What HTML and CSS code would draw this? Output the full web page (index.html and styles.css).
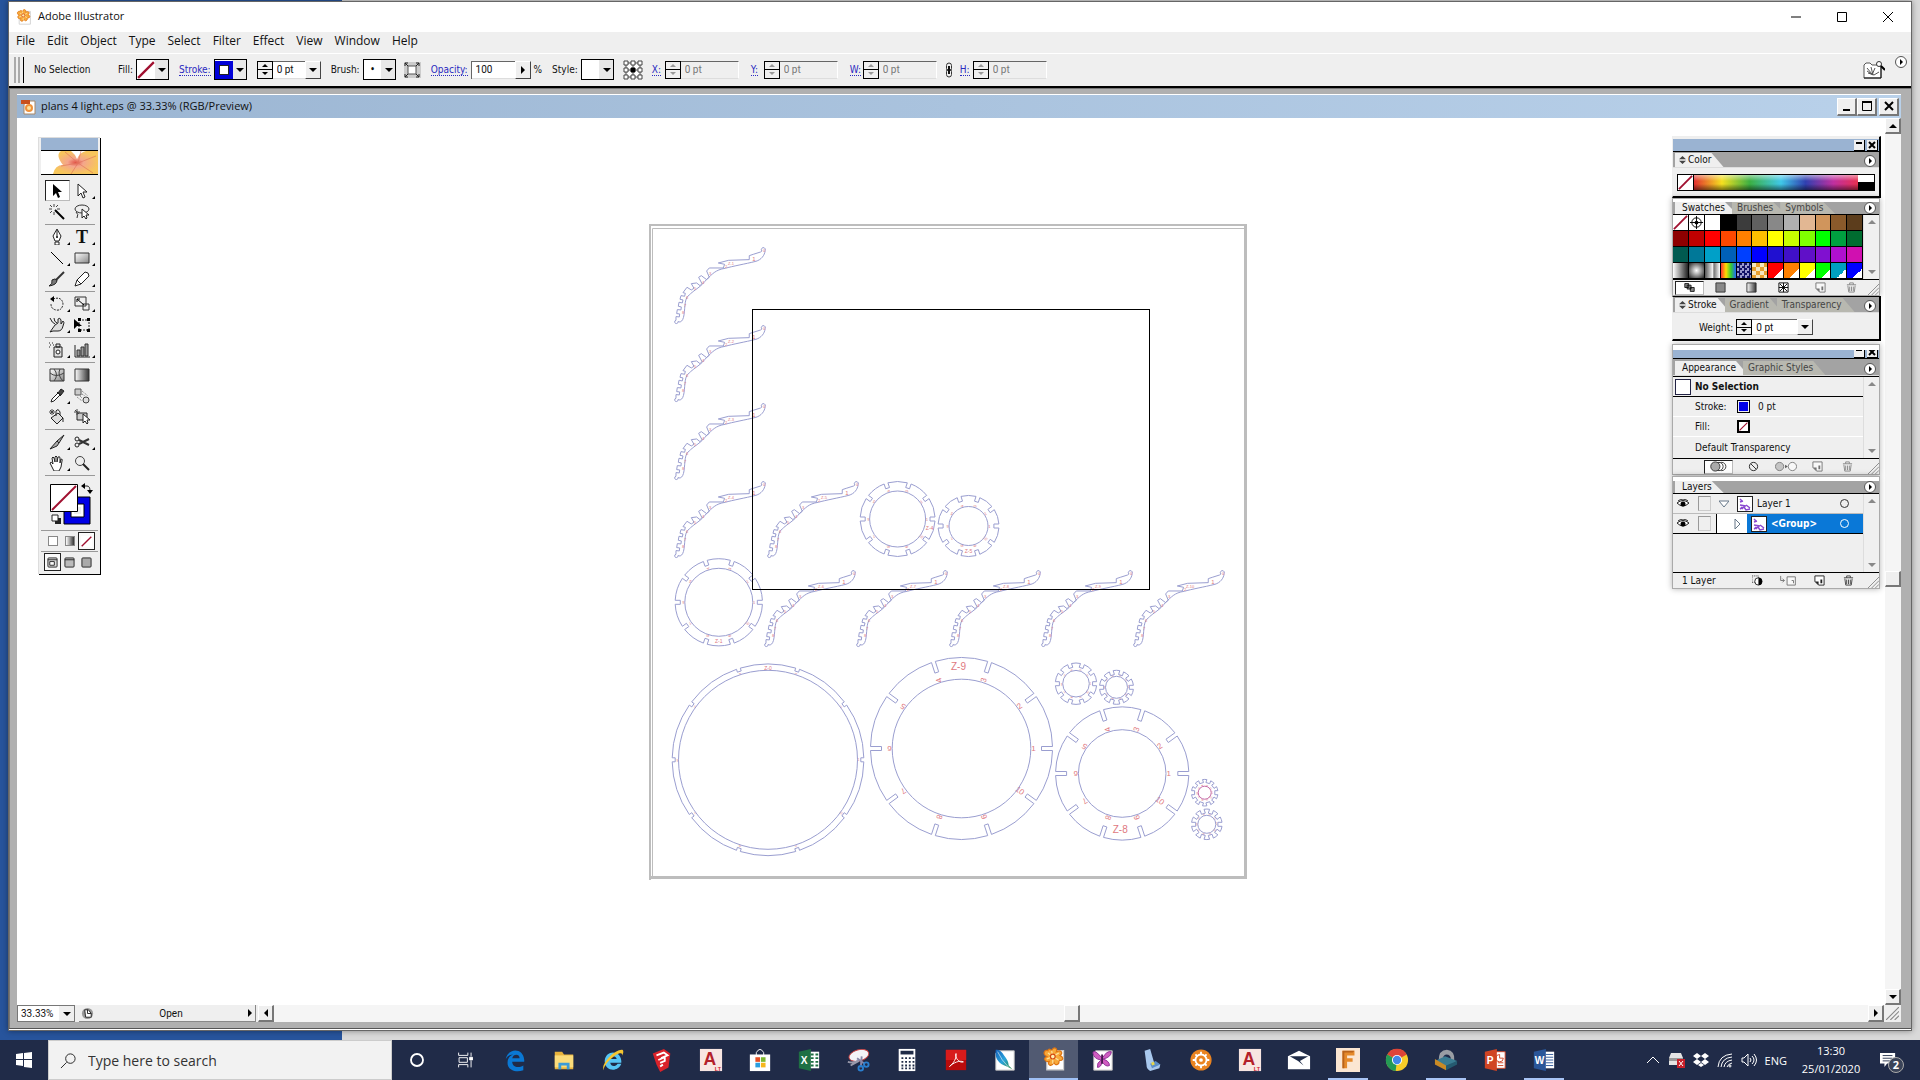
FILE: index.html
```html
<!DOCTYPE html>
<html lang="en">
<head>
    <meta charset="UTF-8">
    <meta name="viewport" content="width=device-width, initial-scale=1.0">
    <title>Adobe Illustrator</title>
    <link rel="stylesheet" href="styles.css">
</head>
<body>
    <svg class="defs" aria-hidden="true">
        <defs>
            <linearGradient id="gray" x1="0" x2="1"><stop offset="0" stop-color="#fff"/><stop offset="1" stop-color="#333"/></linearGradient>
            <linearGradient id="soft" x1="0" x2="1" y2="1"><stop offset="0" stop-color="#fff"/><stop offset="1" stop-color="#888"/></linearGradient>
            <radialGradient id="petal"><stop offset="0" stop-color="#e2574a"/><stop offset=".35" stop-color="#f4a58c"/><stop offset="1" stop-color="#f7c65c"/></radialGradient>
            <linearGradient id="feather" x1="0" y1="0" x2="1" y2="1"><stop offset="0" stop-color="#1560b8"/><stop offset=".5" stop-color="#2aa4dc"/><stop offset="1" stop-color="#2b8a3a"/></linearGradient>
            <symbol id="flower" viewBox="0 0 20 20">
                <path d="M6 3h12v16H4V7z" fill="#fff" stroke="#ccc"/>
                <path d="M8 3c2-4 5-2 4 1 4-2 6 1 3 3 4 2 2 5-1 4 1 4-3 5-4 2-2 4-6 2-4-1-4 1-5-3-2-4-4-2-2-6 1-5 0-1 1-2 3 0z" fill="#f8a93a" stroke="#de7412"/>
                <path d="M9 8L8 3M9 8l5-3M9 8l5 3M9 8v6M9 8l-5 2M9 8L5 5" stroke="#fde3a0"/>
                <circle cx="9" cy="8" r="2" fill="#fff0b0" stroke="#d4480f"/>
            </symbol>
            <symbol id="trash" viewBox="0 0 12 12"><path d="M1 3h10M4 3V1h4v2M2 4l1 7h6l1-7M4 5v5M6 5v5M8 5v5" fill="none" stroke="#444"/></symbol>
            <symbol id="page" viewBox="0 0 12 12"><path d="M1 1h10v10H5L1 7z" fill="#fff" stroke="currentColor"/><path d="M1 7h4v4zM7 5h2v4H7z" fill="currentColor"/></symbol>
            <symbol id="grip" viewBox="0 0 12 12"><path d="M0 12L12 0M4 12l8-8M8 12l4-4" stroke="#888" fill="none"/></symbol>
            <symbol id="none" viewBox="0 0 16 16"><path d="M0 0h16v16H0z" fill="#fff"/><path d="M1 15L15 1" stroke="#a01030" stroke-width="2"/></symbol>
            <symbol id="eye" viewBox="0 0 12 10"><path d="M0 4q6-5 12 0-6 6-12 0z" fill="#fff" stroke="#222"/><circle cx="6" cy="5" r="2.500"/><path d="M1 2q5-4 10 0" stroke="#222" fill="none"/></symbol>
            <symbol id="thumb" viewBox="0 0 16 16"><path d="M0 0h16v16H0z" fill="#fff" stroke="#222" stroke-width="2"/><path d="M3 3l2 2M3 6l3-1M3 9l6 1M3 13l4-2 2 3 4-1M9 9l4 3M4 11l2 2" stroke="#8a4ad0" stroke-width="1.500" fill="none"/></symbol>
        </defs>
    </svg>

    <main class="app">
        <header class="titlebar">
            <svg class="app-icon"><use href="#flower"/></svg>
            <span>Adobe Illustrator</span>
            <div class="win-buttons">
                <button aria-label="Minimize"><svg viewBox="0 0 12 12"><path d="M1 6h10"/></svg></button>
                <button aria-label="Maximize"><svg viewBox="0 0 12 12"><path d="M1.500 1.500h9v9h-9z"/></svg></button>
                <button aria-label="Close"><svg viewBox="0 0 12 12"><path d="M1 1l10 10M11 1L1 11"/></svg></button>
            </div>
        </header>

        <nav class="menubar">
            <button>File</button><button>Edit</button><button>Object</button><button>Type</button><button>Select</button><button>Filter</button><button>Effect</button><button>View</button><button>Window</button><button>Help</button>
        </nav>

        <div class="controlbar">
            <div class="gripper"></div>
            <span class="selection">No Selection</span>
            <div class="field">
                <span>Fill:</span>
                <button class="swatch-drop" aria-label="Fill color"><svg><use href="#none"/></svg><i class="down"></i></button>
            </div>
            <div class="field">
                <a href="#">Stroke:</a>
                <button class="swatch-drop" aria-label="Stroke color"><b class="stroke-chip"></b><i class="down"></i></button>
            </div>
            <div class="combo weight">
                <span class="spinner"><button aria-label="Increase stroke"></button><button aria-label="Decrease stroke"></button></span>
                <input type="text" value="0 pt" aria-label="Stroke weight">
                <button class="arrow" aria-label="Stroke weights"><i class="down"></i></button>
            </div>
            <div class="field">
                <span>Brush:</span>
                <button class="swatch-drop" aria-label="Brush"><b class="brush-chip">•</b><i class="down"></i></button>
            </div>
            <button class="tiny-icon" aria-label="Options"><svg viewBox="0 0 16 16"><path d="M4 4h8v8H4z" fill="#fff" stroke="#555"/><path d="M1 4V1h3M12 1h3v3M15 12v3h-3M4 15H1v-3M1 1l3 3M15 1l-3 3M15 15l-3-3M1 15l3-3" fill="none" stroke="#222"/></svg></button>
            <div class="field">
                <a href="#">Opacity:</a>
                <div class="combo opacity">
                    <input type="text" value="100" aria-label="Opacity">
                    <button class="arrow" aria-label="Opacity slider"><i class="right"></i></button>
                </div>
                <span>%</span>
            </div>
            <div class="field">
                <span>Style:</span>
                <button class="swatch-drop" aria-label="Style"><b class="blank-chip"></b><i class="down"></i></button>
            </div>
            <svg class="refpoint" viewBox="0 0 20 20" fill="#fff" stroke="#444"><path d="M3 3h14v14H3zM10 3v14M3 10h14"/><path d="M1 1h4v4H1zM8 1h4v4H8zM15 1h4v4h-4zM1 8h4v4H1zM15 8h4v4h-4zM1 15h4v4H1zM8 15h4v4H8zM15 15h4v4h-4z"/><path d="M8 8h4v4H8z" fill="#000" stroke="#000"/></svg>
            <div class="field coord">
                <a href="#">X:</a>
                <div class="combo off"><span class="spinner"><button aria-label="X up" disabled></button><button aria-label="X down" disabled></button></span><input type="text" value="0 pt" aria-label="X" disabled></div>
            </div>
            <div class="field coord">
                <a href="#">Y:</a>
                <div class="combo off"><span class="spinner"><button aria-label="Y up" disabled></button><button aria-label="Y down" disabled></button></span><input type="text" value="0 pt" aria-label="Y" disabled></div>
            </div>
            <div class="field coord">
                <a href="#">W:</a>
                <div class="combo off"><span class="spinner"><button aria-label="W up" disabled></button><button aria-label="W down" disabled></button></span><input type="text" value="0 pt" aria-label="Width" disabled></div>
            </div>
            <svg class="chain" viewBox="0 0 8 16" fill="none" stroke="#333"><rect x="1.500" y="1" width="5" height="8" rx="2.500"/><rect x="1.500" y="7" width="5" height="8" rx="2.500"/><path d="M4 4v8" stroke="#111" stroke-width="2"/></svg>
            <div class="field coord">
                <a href="#">H:</a>
                <div class="combo off"><span class="spinner"><button aria-label="H up" disabled></button><button aria-label="H down" disabled></button></span><input type="text" value="0 pt" aria-label="Height" disabled></div>
            </div>
            <button class="bridge" aria-label="Go to Bridge"><svg viewBox="0 0 22 18"><path d="M1 17V4l2-2h4l2 2h9v13z" fill="#fff" stroke="#555"/><path d="M4 7l5 6M8 6l2 8M12 7l-3 7M5 12l6 2 5-3M4 10l6 4" stroke="#555" fill="none"/><path d="M1 17h17V5" stroke="#111" fill="none"/><circle cx="16" cy="3" r="2.500" fill="#fff" stroke="#333"/><path d="M18 5l4 4" stroke="#000" stroke-width="2"/></svg></button>
            <button class="round" aria-label="Palette menu"><i class="right"></i></button>
        </div>

        <div class="workspace">
            <section class="doc">
                <header class="doc-title">
                    <svg class="doc-icon" viewBox="0 0 16 16"><path d="M4 2h10v13H3V6z" fill="#fff" stroke="#a86"/><path d="M0 1h9v4H0z" fill="#c8501e"/><circle cx="8" cy="9" r="4" fill="#f0913a"/><circle cx="8" cy="9" r="2" fill="#fbe3a0"/></svg>
                    <span>plans 4 light.eps @ 33.33% (RGB/Preview)</span>
                    <div class="doc-buttons">
                        <button aria-label="Minimize document"><svg viewBox="0 0 14 14"><path d="M3 11h7"/></svg></button>
                        <button aria-label="Maximize document"><svg viewBox="0 0 14 14"><path d="M2 3h10"/><path d="M2.500 3v8.500h9V3" stroke-width="1"/></svg></button>
                        <button aria-label="Close document"><svg viewBox="0 0 14 14"><path d="M3 3l8 8M11 3l-8 8"/></svg></button>
                    </div>
                </header>

                <div class="doc-body">
                    <div class="canvas">
                        <svg class="artboard" id="artboard" viewBox="649 224 598 656">
                            <path d="M650 880V225h597" stroke="#bdbdbd" stroke-width="2" fill="none"/>
                            <path d="M652.500 877V228.500H1244" stroke="#bdbdbd" fill="none"/>
                            <path d="M650 877.500h595.500V225" stroke="#bdbdbd" stroke-width="3" fill="none"/>
                            <g id="art"></g>
                            <rect x="752.500" y="309.500" width="397" height="280" fill="none" stroke="#000"/>
                        </svg>

                        <aside class="toolbox" aria-label="Tools">
                            <div class="tool-bar"></div>
                            <svg class="tool-logo" viewBox="0 0 57 23" preserveAspectRatio="none"><path d="M0 0h57v23H0z" fill="#fff"/><path d="M12 23q2-9 10-9Q14 4 20 0h10q4 3 6 8 3-7 9-8h12v23z" fill="url(#petal)"/><path d="M37 12L24 1M37 12l18-7M37 12l15 10M37 12L20 15M37 12l-7 11M37 12l3-12" stroke="#e0705a" opacity=".6"/></svg>
                            <div class="tools">
                                <button class="on" aria-label="Selection"><svg viewBox="0 0 16 16"><path d="M4 1v12l3-3 2 5 2-1-2-5h4z"/></svg></button>
                                <button class="more" aria-label="Direct Selection"><svg viewBox="0 0 16 16"><path d="M4 1v12l3-3 2 5 2-1-2-5h4z" fill="#fff" stroke="#222"/></svg></button>
                                <button aria-label="Magic Wand"><svg viewBox="0 0 16 16"><path d="M6 6l9 9" stroke="#000" stroke-width="2"/><path d="M5 0v3M5 8v3M0 5h3M8 5h3M1 1l2 2M9 1L7 3M1 9l2-2" stroke="#444"/></svg></button>
                                <button aria-label="Lasso"><svg viewBox="0 0 16 16"><ellipse cx="8" cy="5" rx="7" ry="4" fill="none" stroke="#333"/><path d="M2 8q3 2 1 6" fill="none" stroke="#333"/><path d="M8 5v9l2-2 2 3 1-1-1-3h3z" fill="#fff" stroke="#222"/></svg></button>
                                <hr>
                                <button class="more" aria-label="Pen"><svg viewBox="0 0 16 16"><path d="M8 0L4 7l2 5h4l2-5zM6 13h4v3H6z" fill="#fff" stroke="#222"/><path d="M8 1v6" stroke="#222"/><circle cx="8" cy="8" r="1"/></svg></button>
                                <button class="more type" aria-label="Type">T</button>
                                <button class="more" aria-label="Line"><svg viewBox="0 0 16 16"><path d="M2 2l12 12" stroke="#000"/></svg></button>
                                <button class="more" aria-label="Rectangle"><svg viewBox="0 0 16 16"><path d="M1 3h14v10H1z" fill="url(#soft)" stroke="#333"/></svg></button>
                                <button aria-label="Paintbrush"><svg viewBox="0 0 16 16"><path d="M15 1L7 9" stroke="#333" stroke-width="2"/><path d="M8 9q0 5-8 6 4-2 3-6 3-2 5 0z" fill="#777" stroke="#222"/></svg></button>
                                <button class="more" aria-label="Pencil"><svg viewBox="0 0 16 16"><path d="M1 15l2-6 8-8q4 0 4 4l-8 8zM3 9l4 4" fill="#fff" stroke="#222"/></svg></button>
                                <hr>
                                <button class="more" aria-label="Rotate"><svg viewBox="0 0 16 16"><path d="M4 3q9-3 10 5-1 7-7 6-5-1-5-6" fill="none" stroke="#222" stroke-dasharray="2 1"/><path d="M5 0v6L1 3z"/></svg></button>
                                <button class="more" aria-label="Scale"><svg viewBox="0 0 16 16"><path d="M1 1h11v9H1zM9 8h6v6H9z" fill="none" stroke="#333"/><path d="M3 3l7 6M3 6V3h3" stroke="#000" fill="none"/></svg></button>
                                <button class="more" aria-label="Warp"><svg viewBox="0 0 16 16"><path d="M1 1q2 5 5 6M5 1q0 4 3 5M1 15l5-7 3-2V2q2-2 3 1v4l2-3q2 1 0 5-1 5-5 5H4z" fill="#ddd" stroke="#222"/></svg></button>
                                <button aria-label="Free Transform"><svg viewBox="0 0 16 16"><path d="M5 3h10v10H5z" fill="none" stroke="#222" stroke-dasharray="2 1"/><path d="M0 2v10l3-3h5z"/><path d="M4 1h3v3H4zM13 1h3v3h-3zM13 12h3v3h-3zM4 12h3v3H4z"/></svg></button>
                                <hr>
                                <button class="more" aria-label="Symbol Sprayer"><svg viewBox="0 0 16 16"><path d="M5 5h8v10H5zM7 2h4v3H7z" fill="#ddd" stroke="#222"/><circle cx="9" cy="10" r="2" fill="#fff" stroke="#222"/><path d="M0 1h1M3 1h1M1 3h1M4 3h1M0 5h1" stroke="#222"/></svg></button>
                                <button class="more" aria-label="Column Graph"><svg viewBox="0 0 16 16"><path d="M1 3v12h15" stroke="#222" fill="none"/><path d="M3 8h3v6H3zM7 5h3v9H7zM11 2h3v12h-3z" fill="#999" stroke="#333"/></svg></button>
                                <hr>
                                <button aria-label="Mesh"><svg viewBox="0 0 16 16"><path d="M1 2h14v12H1z" fill="url(#soft)" stroke="#333"/><path d="M1 6q6 5 14 0M5 2q5 6 0 12M11 2q-3 6 3 12" fill="none" stroke="#444"/></svg></button>
                                <button aria-label="Gradient"><svg viewBox="0 0 16 16"><path d="M1 2h14v12H1z" fill="url(#gray)" stroke="#333"/></svg></button>
                                <button class="more" aria-label="Eyedropper"><svg viewBox="0 0 16 16"><path d="M2 14l1-3 6-6 2 2-6 6z" fill="#fff" stroke="#222"/><path d="M8 4l4 4M9 5l3-4 3 2-3 4z" stroke="#222" fill="#444"/></svg></button>
                                <button aria-label="Blend"><svg viewBox="0 0 16 16"><path d="M1 1h6v6H1z" fill="#ccc" stroke="#555"/><circle cx="12" cy="12" r="3" fill="#ddd" stroke="#444"/><path d="M8 3l6 5M8 6l3 2M3 9l5 4M6 8l2 2" stroke="#777" stroke-dasharray="1 1"/></svg></button>
                                <button aria-label="Live Paint Bucket"><svg viewBox="0 0 16 16"><path d="M2 9l7-5 5 5-6 6z" fill="#ddd" stroke="#222"/><path d="M7 7V2q2-3 4 1v3M14 9v4" fill="none" stroke="#222"/><path d="M3 0v6M0 3h6M1 1l4 4M5 1L1 5" stroke="#444"/></svg></button>
                                <button aria-label="Live Paint Selection"><svg viewBox="0 0 16 16"><path d="M3 4h10v7H3z" fill="#ccc" stroke="#222"/><path d="M9 5v9l2-2 2 3 1-1-1-3h3z" fill="#fff" stroke="#222"/><path d="M3 0v6M0 3h6M1 1l4 4" stroke="#444"/></svg></button>
                                <hr>
                                <button class="more" aria-label="Slice"><svg viewBox="0 0 16 16"><path d="M15 1L8 7l2 2zM1 15l7-8 2 2-2 3z" fill="#aaa" stroke="#222"/></svg></button>
                                <button class="more" aria-label="Scissors"><svg viewBox="0 0 16 16"><path d="M5 6l10 5M5 10l10-5" stroke="#333" stroke-width="2"/><circle cx="3" cy="5" r="2" fill="none" stroke="#222"/><circle cx="3" cy="11" r="2" fill="none" stroke="#222"/></svg></button>
                                <button class="more" aria-label="Hand"><svg viewBox="0 0 16 16"><path d="M4 14L1 8q1-2 3 1L3 3q1-2 2 0l1 4V2q1-2 2 0v5l1-5q2-1 2 1v5l1-4q2 0 1 2l-1 6-2 4H5z" fill="#fff" stroke="#222"/></svg></button>
                                <button aria-label="Zoom"><svg viewBox="0 0 16 16"><circle cx="6" cy="6" r="4.500" fill="#eee" stroke="#444"/><path d="M9 9l6 6" stroke="#222" stroke-width="2"/></svg></button>
                                <hr>
                            </div>
                            <svg class="fill-stroke" viewBox="1 0 57 46"><path d="M24 15h26v27H24z" fill="#0000e6" stroke="#000"/><path d="M31 22h13v13H31z" fill="#fff" stroke="#000"/><path d="M34 25h7v7h-7z" fill="#efefef"/><path d="M10.500 2.500h27v27h-27z" fill="#fff" stroke="#000"/><path d="M12 28L36 4" stroke="#a01030" stroke-width="2"/><path d="M43 4h4q3 0 3 5" fill="none" stroke="#222"/><path d="M41 4l4-3v6zM47 8h6l-3 4z"/><path d="M15 36h6v6h-6z" fill="#222"/><path d="M12 33h6v6h-6z" fill="#fff" stroke="#222"/></svg>
                            <hr>
                            <div class="modes">
                                <button aria-label="Color"><i class="m-white"></i></button>
                                <button aria-label="Gradient fill"><i class="m-grad"></i></button>
                                <button class="on" aria-label="None"><svg><use href="#none"/></svg></button>
                            </div>
                            <hr>
                            <div class="modes">
                                <button class="on" aria-label="Standard screen"><svg viewBox="0 0 12 12"><rect x="1" y="1" width="10" height="10" rx="1" fill="#ddd" stroke="#222"/><path d="M1 3h10M3 5h5v4H3z" fill="#fff" stroke="#222"/></svg></button>
                                <button aria-label="Full screen with menu"><svg viewBox="0 0 12 12"><rect x="1" y="1" width="10" height="10" rx="1" fill="#bbb" stroke="#222"/><path d="M1 3h10" stroke="#222"/></svg></button>
                                <button aria-label="Full screen"><svg viewBox="0 0 12 12"><rect x="1" y="1" width="10" height="10" rx="1" fill="#aaa" stroke="#222"/></svg></button>
                            </div>
                        </aside>

                        <aside class="palettes">
                            <section class="palette color">
                                <div class="pal-bar"><button aria-label="Collapse"><svg viewBox="0 0 10 10"><path d="M2 3h6"/></svg></button><button aria-label="Close palette"><svg viewBox="0 0 10 10"><path d="M2 2l6 6M8 2L2 8"/></svg></button></div>
                                <div class="tabs"><button class="tab on"><i class="updown"></i>Color</button><button class="round" aria-label="Color menu"><i class="right"></i></button></div>
                                <div class="spectrum"><svg><use href="#none"/></svg><div class="rainbow"></div><div class="bw"></div></div>
                            </section>

                            <section class="palette docked swatches">
                                <div class="pal-gap"></div>
                                <div class="tabs cut"><button class="tab on">Swatches</button><button class="tab">Brushes</button><button class="tab">Symbols</button><button class="round" aria-label="Swatches menu"><i class="right"></i></button></div>
                                <div class="scroll-pane">
                                    <div class="swatch-grid" id="swatches"></div>
                                    <div class="mini-scroll"><i class="up"></i><i class="down"></i></div>
                                </div>
                                <div class="foot icons6">
                                    <button class="on" aria-label="Show all"><svg viewBox="0 0 14 12"><path d="M1 1h5v5H1zM4 3h5v5H4zM8 6h5v5H8z" fill="#888" stroke="#000"/></svg></button>
                                    <button aria-label="Show colors"><svg viewBox="0 0 12 12"><path d="M1 1h10v10H1z" fill="#888" stroke="#333"/></svg></button>
                                    <button aria-label="Show gradients"><svg viewBox="0 0 12 12"><path d="M1 1h10v10H1z" fill="url(#gray)" stroke="#333"/></svg></button>
                                    <button aria-label="Show patterns"><svg viewBox="0 0 12 12"><path d="M1 1h10v10H1z" fill="#fff" stroke="#000"/><path d="M2 2l8 8M10 2l-8 8M6 1v10M1 6h10" stroke="#000"/></svg></button>
                                    <button class="dim" aria-label="New swatch"><svg><use href="#page"/></svg></button>
                                    <button class="dim" aria-label="Delete swatch"><svg><use href="#trash"/></svg></button>
                                    <svg class="grip"><use href="#grip"/></svg>
                                </div>
                            </section>

                            <section class="palette strokes">
                                <div class="tabs"><button class="tab on"><i class="updown"></i>Stroke</button><button class="tab">Gradient</button><button class="tab">Transparency</button><button class="round" aria-label="Stroke menu"><i class="right"></i></button></div>
                                <div class="weight-row">
                                    <label for="weight">Weight:</label>
                                    <div class="combo weight">
                                        <span class="spinner"><button aria-label="Increase weight"></button><button aria-label="Decrease weight"></button></span>
                                        <input type="text" id="weight" value="0 pt">
                                        <button class="arrow" aria-label="Weights"><i class="down"></i></button>
                                    </div>
                                </div>
                            </section>

                            <section class="palette docked appearance">
                                <div class="pal-gap"></div>
                                <div class="pal-bar short"><button aria-label="Collapse"><svg viewBox="0 0 10 10"><path d="M2 3h6"/></svg></button><button aria-label="Close palette"><svg viewBox="0 0 10 10"><path d="M2 2l6 6M8 2L2 8"/></svg></button></div>
                                <div class="tabs"><button class="tab on">Appearance</button><button class="tab">Graphic Styles</button><button class="round" aria-label="Appearance menu"><i class="right"></i></button></div>
                                <div class="scroll-pane">
                                    <div class="rows">
                                        <div class="row head"><i class="empty-thumb"></i>No Selection</div>
                                        <div class="row"><span>Stroke:</span><i class="chip blue"></i>0 pt</div>
                                        <div class="row"><span>Fill:</span><i class="chip"><svg><use href="#none"/></svg></i></div>
                                        <div class="row">Default Transparency</div>
                                    </div>
                                    <div class="mini-scroll"><i class="up"></i><i class="down"></i></div>
                                </div>
                                <div class="foot icons5">
                                    <button class="on" aria-label="New art has basic appearance"><svg class="wide" viewBox="0 0 20 12"><circle cx="13" cy="6" r="4.500" fill="#fff" stroke="#333"/><circle cx="10" cy="6" r="4.500" fill="#fff" stroke="#333"/><circle cx="6" cy="6" r="5" fill="#aaa" stroke="#333"/></svg></button>
                                    <button aria-label="Clear appearance"><svg viewBox="0 0 12 12"><circle cx="6" cy="6" r="4.500" fill="none" stroke="#222"/><path d="M3 3l6 6" stroke="#222"/></svg></button>
                                    <button class="dim" aria-label="Reduce to basic"><svg class="wide" viewBox="0 0 24 12"><circle cx="5" cy="6" r="4.500" fill="#aaa" stroke="#333"/><path d="M11 4l3 2-3 2z"/><circle cx="19" cy="6" r="4.500" fill="#fff" stroke="#333"/></svg></button>
                                    <button class="dim" aria-label="Duplicate item"><svg><use href="#page"/></svg></button>
                                    <button class="dim" aria-label="Delete item"><svg><use href="#trash"/></svg></button>
                                    <svg class="grip"><use href="#grip"/></svg>
                                </div>
                            </section>

                            <section class="palette docked layers">
                                <div class="pal-gap"></div>
                                <div class="tabs cut"><button class="tab on">Layers</button><button class="round" aria-label="Layers menu"><i class="right"></i></button></div>
                                <div class="scroll-pane">
                                    <div class="rows">
                                        <div class="layer"><svg class="eye"><use href="#eye"/></svg><i class="lock"></i><svg class="twist" viewBox="0 0 10 10"><path d="M0 2h10L5 8z" fill="#fff" stroke="#678"/></svg><svg class="thumb"><use href="#thumb"/></svg><span>Layer 1</span><i class="target"></i></div>
                                        <div class="layer sub"><svg class="eye"><use href="#eye"/></svg><i class="lock"></i><div class="twist-cell"><svg class="twist" viewBox="0 0 10 10"><path d="M3 0v10l5-5z" fill="#fff" stroke="#678"/></svg></div><div class="picked"><svg class="thumb"><use href="#thumb"/></svg><span>&lt;Group&gt;</span><i class="target"></i></div></div>
                                    </div>
                                    <div class="mini-scroll"><i class="up"></i><i class="down"></i></div>
                                </div>
                                <div class="foot layer-foot">
                                    <span>1 Layer</span>
                                    <button aria-label="Clipping mask"><svg viewBox="0 0 12 12"><path d="M0 1h7v7H0z" fill="none" stroke="#333" stroke-dasharray="1 1"/><circle cx="7" cy="7" r="4" fill="#fff" stroke="#222"/><path d="M7 3a4 4 0 0 1 0 8z"/></svg></button>
                                    <button class="dim" aria-label="New sublayer"><svg class="wide" viewBox="0 0 20 12"><path d="M2 1v5h4M4 4l2 2-2 2" fill="none" stroke="#222"/><path d="M9 2h9v9H9zM14 6h2v3" fill="#fff" stroke="#222"/></svg></button>
                                    <button aria-label="New layer"><svg><use href="#page"/></svg></button>
                                    <button aria-label="Delete layer"><svg><use href="#trash"/></svg></button>
                                    <svg class="grip"><use href="#grip"/></svg>
                                </div>
                            </section>
                        </aside>
                    </div>

                    <div class="vscroll">
                        <button aria-label="Scroll up"><i class="up"></i></button>
                        <span class="space"></span>
                        <button class="knob" aria-label="Vertical position"></button>
                        <span class="space after"></span>
                        <button aria-label="Scroll down"><i class="down"></i></button>
                    </div>
                </div>

                <footer class="doc-foot">
                    <div class="zoom-box"><input type="text" value="33.33%" aria-label="Zoom level"><button aria-label="Zoom levels"><i class="down"></i></button></div>
                    <div class="status"><svg viewBox="0 0 14 14"><circle cx="7" cy="7" r="6" fill="#999"/><path d="M4 3h4l3 4v4H5z" fill="#fff" stroke="#222"/><path d="M7 3v4h4" fill="none" stroke="#222"/></svg><span>Open</span><i class="right"></i></div>
                    <div class="hscroll">
                        <button aria-label="Scroll left"><i class="left"></i></button>
                        <span class="space"></span>
                        <button class="knob" aria-label="Horizontal position"></button>
                        <span class="space after"></span>
                        <button aria-label="Scroll right"><i class="right"></i></button>
                    </div>
                    <svg class="corner"><use href="#grip"/></svg>
                </footer>
            </section>
        </div>
    </main>

    <footer class="taskbar">
        <button class="start" aria-label="Start"><svg viewBox="0 0 16 16"><path d="M0 2l7-1v6H0zM8 1l8-1v7H8zM0 8h7v6l-7-1zM8 8h8v8l-8-1z" fill="#fff"/></svg></button>
        <label class="search"><svg viewBox="0 0 18 18"><circle cx="11" cy="7" r="5" fill="none" stroke="#222"/><path d="M7 11l-6 6" stroke="#222"/></svg><input type="text" placeholder="Type here to search" aria-label="Type here to search"></label>
        <div class="apps">
            <button aria-label="Cortana"><svg viewBox="0 0 26 26"><circle cx="13" cy="13" r="6.500" fill="none" stroke="#fff" stroke-width="2"/></svg></button>
            <button aria-label="Task View"><svg viewBox="0 0 26 26" fill="none" stroke="#fff"><path d="M5 5v3h10V5M5 21v-3h10v3M5.500 10.500h9v5h-9zM18.500 5v4M18.500 14v7"/><path d="M17 10h3v3h-3z" fill="#fff"/></svg></button>
            <button aria-label="Edge"><svg viewBox="0 0 26 26"><path d="M3 12C5 0 22-1 23 13v2H10c0 6 7 7 12 4v5C14 27 4 24 5 15c0-4 3-7 6-8-4 0-6 2-8 5zM10 11h8c0-5-7-5-8 0z" fill="#0a78d4"/></svg></button>
            <button aria-label="File Explorer"><svg viewBox="0 0 26 26"><path d="M3 4h8l2 3h10v16H3z" fill="#e8b33c"/><path d="M3 8h20v13H3z" fill="#fbdc7a"/><path d="M7 23v-7h12v7h-3v-4h-6v4z" fill="#3a9bd8"/></svg></button>
            <button aria-label="Internet Explorer"><svg viewBox="0 0 26 26"><path d="M4 14C5 2 21 2 22 14v2H10c1 5 6 4 8 1h4C18 27 4 25 4 14zm6-2h7c-1-4-6-4-7 0z" fill="#56c5f5"/><path d="M3 24C-1 18 15 1 23 2c2 1 1 4 0 6 0-8-20 8-20 16z" fill="#f6c630"/></svg></button>
            <button aria-label="SketchUp"><svg viewBox="0 0 26 26"><path d="M3 6l12-5 7 5-2 15-9 5-4-8z" fill="#d9222a"/><path d="M7 8l8-3 4 3-7 3M9 13l7-3v4l-5 2M11 20l3-2" stroke="#fff" stroke-width="2" fill="none"/></svg></button>
            <button aria-label="AutoCAD LT"><svg viewBox="0 0 26 26"><path d="M1 1h24v24H1z" fill="#f8e6e2"/><text x="5" y="18" class="glyph" fill="#b3202a">A</text><text x="17" y="25" class="glyph-small" fill="#d0202a">LT</text></svg></button>
            <button aria-label="Microsoft Store"><svg viewBox="0 0 26 26"><path d="M9 8V5q4-7 8 0v3" fill="none" stroke="#fff"/><path d="M2 7h22v18H2z" fill="#fff"/><path d="M8 10h5v5H8z" fill="#e74f25"/><path d="M14 10h5v5h-5z" fill="#7cb82f"/><path d="M8 16h5v5H8z" fill="#2a9fe0"/><path d="M14 16h5v5h-5z" fill="#f6b71d"/></svg></button>
            <button aria-label="Excel"><svg viewBox="0 0 26 26"><path d="M13 4h11v18H13z" fill="#fff"/><path d="M15 7h3M20 7h3M15 11h3M20 11h3M15 15h3M20 15h3M15 19h3M20 19h3" stroke="#1f7044" stroke-width="2"/><path d="M2 4l13-3v24L2 22z" fill="#1f7044"/><text x="4" y="17" class="glyph-mid" fill="#fff">X</text></svg></button>
            <button aria-label="Snipping Tool"><svg viewBox="0 0 26 26"><ellipse cx="14" cy="8" rx="11" ry="6" transform="rotate(-15 14 8)" fill="#f4f4f8" stroke="#c44"/><path d="M2 15q7 2 12-2M5 19l9-5" stroke="#99a" stroke-width="2" fill="none"/><path d="M12 11l8 6M17 9l-1 12" stroke="#88a" stroke-width="2"/><circle cx="22" cy="18" r="2.500" fill="none" stroke="#2a7fd0" stroke-width="2"/><circle cx="16" cy="22" r="2.500" fill="none" stroke="#2a7fd0" stroke-width="2"/></svg></button>
            <button aria-label="Calculator"><svg viewBox="0 0 26 26"><path d="M4 1h18v24H4z" fill="#fff"/><path d="M6 3h14v4H6z" fill="#1f2b47"/><path d="M7 11h14M7 15h14M7 19h14M7 22h14" stroke="#1f2b47" stroke-width="2" stroke-dasharray="2 2"/></svg></button>
            <button aria-label="Acrobat"><svg viewBox="0 0 26 26"><path d="M2 2h22v22H2z" fill="#b90c0c"/><path d="M2 2h22v11H2z" fill="#d81b1b"/><path d="M6 20c4-3 8-9 7-14-2 4 4 11 8 9-4-2-11 1-15 5z" fill="none" stroke="#fff"/></svg></button>
            <button aria-label="Photoshop"><svg viewBox="0 0 26 26"><path d="M5 3h18v21H3V6z" fill="#fff" stroke="#bbb"/><path d="M3 2q5-1 9 6 5 6 5 11l4 4-6-3Q1 16 3 2z" fill="url(#feather)"/><path d="M5 4q4 9 12 17" stroke="#fff" fill="none" opacity=".6"/></svg></button>
            <button class="active" aria-label="Illustrator"><svg><use href="#flower"/></svg></button>
            <button aria-label="InDesign"><svg viewBox="0 0 26 26"><path d="M5 3h18v21H3V6z" fill="#fff" stroke="#bbb"/><path d="M12 11Q4 1 2 5q1 7 9 8-5 3-4 8 4 0 5-6 4 6 8 4 0-5-7-7 9-2 9-8-5-1-9 6z" fill="#d05cc0" stroke="#8a2d94"/><path d="M12 7v10" stroke="#4a1850" stroke-width="2"/></svg></button>
            <button aria-label="Sculpt"><svg viewBox="0 0 26 26"><path d="M5 3l6-2 4 14 7 3-1 4-10 3q-4-2-4-7z" fill="#a8c8ee"/><path d="M11 17l6-3 5 4-9 4z" fill="#5b8dc8"/><path d="M12 16l3-1 1 3-3 1z" fill="#e8d84a"/></svg></button>
            <button aria-label="Helm"><svg viewBox="0 0 26 26"><circle cx="13" cy="13" r="11.500" fill="#ea8420"/><circle cx="13" cy="13" r="6" fill="none" stroke="#fff" stroke-width="2"/><circle cx="13" cy="13" r="2" fill="#fff"/><path d="M13 4v3M13 19v3M4 13h3M19 13h3M7 7l2 2M17 17l2 2M19 7l-2 2M9 17l-2 2" stroke="#fff" stroke-width="2"/></svg></button>
            <button aria-label="AutoCAD LT 2"><svg viewBox="0 0 26 26"><path d="M1 1h24v24H1z" fill="#f8e6e2"/><text x="5" y="18" class="glyph" fill="#b3202a">A</text><text x="17" y="25" class="glyph-small" fill="#d0202a">LT</text></svg></button>
            <button aria-label="Mail"><svg viewBox="0 0 26 26"><path d="M1 9l12-6 12 6v14H1z" fill="#fff"/><path d="M3 9h20l-9 5 4 5-6-5z" fill="#1f2b47"/></svg></button>
            <button class="open" aria-label="Fusion 360"><svg viewBox="0 0 26 26"><path d="M0 0h26v26H0z" fill="#fbe6d2"/><path d="M7 3h13v5h-8v3h6v4h-6v7H7z" fill="#e58a2b"/><path d="M7 3h13l-2 2H9v17H7z" fill="#b8621a"/></svg></button>
            <button aria-label="Chrome"><svg viewBox="0 0 26 26"><circle cx="13" cy="13" r="12" fill="#f8cd28"/><path d="M13 13L2.500 7a12 12 0 0 1 21 0z" fill="#dd4438"/><path d="M13 13L2.500 7a12 12 0 0 0 9 18z" fill="#249a55"/><circle cx="13" cy="13" r="5.500" fill="#fff"/><circle cx="13" cy="13" r="4.500" fill="#4287e8"/></svg></button>
            <button class="open" aria-label="Slicer"><svg viewBox="0 0 26 26"><path d="M5 14Q5 2 14 2q9 1 8 12l-4-1q1-6-5-6-4 1-3 7z" fill="#9a9ea4"/><path d="M1 14l11-5 13 5-12 8z" fill="#3a7c92"/><path d="M1 12l12 7v5L1 18z" fill="#c98a25"/><path d="M25 14l-12 5v5l12-6z" fill="#255a70"/></svg></button>
            <button aria-label="PowerPoint"><svg viewBox="0 0 26 26"><path d="M13 4h11v18H13z" fill="#fff" stroke="#d04423"/><path d="M16 16h6M16 19h6M18 7v4h4a4 4 0 1 1-4-4" stroke="#d04423" fill="none"/><path d="M2 4l13-3v24L2 22z" fill="#d04423"/><text x="4" y="17" class="glyph-mid" fill="#fff">P</text></svg></button>
            <button class="open" aria-label="Word"><svg viewBox="0 0 26 26"><path d="M13 4h11v18H13z" fill="#fff"/><path d="M15 7h8M15 10h8M15 13h8M15 16h8M15 19h8" stroke="#2a5699"/><path d="M2 4l13-3v24L2 22z" fill="#2a5699"/><text x="3" y="17" class="glyph-mid" fill="#fff">W</text></svg></button>
        </div>
        <div class="tray">
            <svg viewBox="0 0 16 16"><path d="M2 11l6-6 6 6" fill="none" stroke="#fff"/></svg>
            <svg viewBox="0 0 16 16"><path d="M2 1h10l2 5v7H0V6z" fill="#e4e4e4"/><path d="M0 6h14v3H0z" fill="#999"/><path d="M8 7h8v9H8z" fill="#c8202a"/><path d="M10 9l4 5M14 9l-4 5" stroke="#fff"/></svg>
            <svg viewBox="0 0 16 16"><path d="M4 1l4 3-4 3-4-3zM12 1l4 3-4 3-4-3zM4 7l4 3-4 3-4-3zM12 7l4 3-4 3-4-3zM8 11l3 2-3 2-3-2z" fill="#fff"/></svg>
            <svg viewBox="0 0 16 16" fill="none" stroke="#fff"><path d="M1 15Q2 3 15 2M4 15Q5 6 15 5M7 15q1-6 8-7M10 15q1-3 5-4"/><circle cx="13" cy="14" r="1"/></svg>
            <svg viewBox="0 0 16 16" fill="none" stroke="#fff"><path d="M1 6h2l4-4v12l-4-4H1zM9 6q2 2 0 4M11 4q4 4 0 8M13 2q5 6 0 12"/></svg>
            <span>ENG</span>
            <time class="clock"><span>13:30</span><span>25/01/2020</span></time>
            <div class="notify"><svg viewBox="0 0 18 18"><path d="M0 1h17v12H8l-3 4v-4H0z" fill="#fff"/><path d="M3 4h11M3 7h11M3 10h8" stroke="#1f2b47"/></svg><b>2</b></div>
        </div>
    </footer>

    <script src="script.js"></script>
</body>
</html>
```

FILE: styles.css
```css
* {
    box-sizing: border-box;
}

html, body {
    height: 100%;
}

body {
    margin: 0;
    display: flex;
    flex-direction: column;
    background: linear-gradient(90deg, #27549c 342px, #d9d9d9 342px);
    font-family: "DejaVu Sans Condensed", "DejaVu Sans", sans-serif;
    font-size: 10px;
    color: #111;
    overflow: hidden;
}

button, input {
    font: inherit;
    color: inherit;
    margin: 0;
    padding: 0;
    border: none;
    border-radius: 0;
    background: none;
}

svg {
    display: block;
    flex: none;
}

hr {
    width: 100%;
    height: 1px;
    margin: 0;
    border: none;
    background: #999;
}

a {
    color: #2a2ac0;
    text-decoration: none;
    border-bottom: 1px dotted #2a2ac0;
}

.defs {
    position: absolute;
    width: 0;
    height: 0;
}

/* arrows */
.up, .down, .left, .right {
    flex: none;
    width: 0;
    height: 0;
    border: 4px solid transparent;
}

.up {
    border-top: none;
    border-bottom-color: #000;
}

.down {
    border-bottom: none;
    border-top-color: #000;
}

.left {
    border-left: none;
    border-right-color: #000;
}

.right {
    border-right: none;
    border-left-color: #000;
}

/* main window */
.app {
    flex: 1;
    display: flex;
    flex-direction: column;
    min-height: 0;
    margin: 1px 8px 9px;
    border: 1px solid #666;
    background: #efefef;
    box-shadow: 0 0 6px rgba(0, 0, 0, 0.4);
}

.titlebar {
    display: flex;
    align-items: center;
    height: 30px;
    flex: none;
    padding-left: 7px;
    background: #fff;
    font-family: "Open Sans", sans-serif;
    font-size: 11px;
    line-height: 14px;
}

.titlebar span, .doc-title span {
    padding-bottom: 2px;
}

.app-icon {
    width: 16px;
    height: 16px;
    margin-right: 6px;
}

.win-buttons {
    display: flex;
    margin-left: auto;
}

.win-buttons button {
    width: 46px;
    height: 30px;
    display: grid;
    place-items: center;
}

.win-buttons svg {
    width: 12px;
    height: 12px;
    fill: none;
    stroke: #000;
}

.menubar {
    display: flex;
    height: 21px;
    flex: none;
    padding-left: 1px;
    font-family: "Open Sans", sans-serif;
    font-size: 12px;
}

.menubar button {
    padding: 0 6px;
    height: 17px;
    line-height: 17px;
}

/* control bar */
.controlbar {
    display: flex;
    align-items: center;
    gap: 10px;
    height: 35px;
    flex: none;
    padding: 0 4px 1px 5px;
    border-top: 1px solid #fff;
    border-bottom: 2px solid #000;
}

.gripper {
    width: 10px;
    height: 26px;
    border-right: 1px solid #000;
    background: linear-gradient(90deg, #aaa 2px, transparent 2px, transparent 4px, #aaa 4px, #aaa 6px, transparent 6px);
}

.selection {
    width: 74px;
}

.field {
    display: flex;
    align-items: center;
    gap: 3px;
}

.swatch-drop {
    display: flex;
    align-items: center;
    width: 33px;
    height: 21px;
    border: 1px solid #000;
    background: linear-gradient(90deg, #fff 17px, #e8e8e8 17px);
}

.swatch-drop svg, .swatch-drop b {
    width: 18px;
    height: 18px;
    margin-right: 3px;
}

.stroke-chip {
    border: 5px solid #0000d8;
    background: #fff;
    outline: 1px solid #222;
    outline-offset: -5px;
}

.brush-chip {
    font-size: 8px;
    line-height: 18px;
    text-align: center;
}

.combo {
    display: flex;
    height: 18px;
    font-family: "Roboto", sans-serif;
}

.combo input {
    width: 20px;
    min-width: 0;
    flex: 1;
    padding-left: 4px;
    background: #fff;
    border-top: 1px solid #666;
    border-bottom: 1px solid #ddd;
}

.weight {
    width: 64px;
}

.opacity {
    width: 60px;
    border-left: 1px solid #666;
}

.arrow {
    width: 16px;
    display: grid;
    place-items: center;
    background: #efefef;
    border: 1px solid #fff;
    border-right-color: #444;
    border-bottom-color: #444;
}

.spinner {
    display: flex;
    flex-direction: column;
    width: 16px;
    flex: none;
    border: 1px solid #000;
}

.spinner button {
    flex: 1;
    display: grid;
    place-items: center;
}

.spinner button:first-child {
    border-bottom: 1px solid #000;
}

.spinner button::after {
    content: "";
    border: 3px solid transparent;
    border-top: none;
    border-bottom-color: #000;
}

.spinner button:last-child::after {
    border: 3px solid transparent;
    border-bottom: none;
    border-top-color: #000;
}

.off .spinner button:first-child::after {
    border-bottom-color: #999;
}

.off .spinner button:last-child::after {
    border-top-color: #999;
}

.off {
    width: 74px;
}

.off input {
    background: #efefef;
    color: #777;
    border-right: 1px solid #fff;
}

.coord {
    width: 87px;
    justify-content: space-between;
    gap: 0;
}

.coord + .coord {
    margin-left: 2px;
}

.tiny-icon {
    width: 17px;
    height: 16px;
    background: #ccc;
    margin-left: -2px;
}

.tiny-icon svg {
    width: 16px;
    height: 16px;
}

.refpoint {
    width: 20px;
    height: 20px;
    margin: 0 -1px;
}

.chain {
    width: 8px;
    height: 16px;
    margin: 0 -3px 0 -2px;
}

.bridge {
    margin-left: auto;
}

.bridge svg {
    width: 22px;
    height: 18px;
}

.round {
    width: 12px;
    height: 12px;
    flex: none;
    display: grid;
    place-items: center;
    border: 1px solid #555;
    border-radius: 50%;
    background: #fff;
}

.round i {
    border-width: 3px;
    border-right: none;
}

.controlbar .round {
    align-self: flex-start;
    margin-top: 2px;
}

/* document window */
.workspace {
    flex: 1;
    min-height: 0;
    display: flex;
    padding: 6px 10px 7px 8px;
    background: #b0b0b0;
    border-bottom: 1px solid #fff;
    box-shadow: inset 0 -1px #555, inset 1px 1px #777;
}

.doc {
    flex: 1;
    min-width: 0;
    display: flex;
    flex-direction: column;
    background: #fff;
}

.doc-title {
    display: flex;
    align-items: center;
    height: 24px;
    flex: none;
    padding: 0 2px 0 4px;
    background: linear-gradient(90deg, #9bb5d2, #b9d1ea);
    border-top: 1px solid #fff;
    font-family: "Open Sans", sans-serif;
    font-size: 11px;
    line-height: 14px;
}

.doc-icon {
    width: 16px;
    height: 16px;
    margin-right: 4px;
}

.doc-buttons {
    display: flex;
    margin-left: auto;
}

.doc-buttons button, .vscroll button, .hscroll button {
    background: #efefef;
    border: 1px solid #fff;
    border-right: 2px solid #777;
    border-bottom: 2px solid #777;
    display: grid;
    place-items: center;
}

.doc-buttons button {
    width: 20px;
    height: 18px;
}

.doc-buttons button:last-child {
    margin-left: 2px;
}

.doc-buttons svg {
    width: 14px;
    height: 14px;
    fill: none;
    stroke: #000;
    stroke-width: 2px;
}

.doc-body {
    flex: 1;
    min-height: 0;
    display: flex;
}

.canvas {
    flex: 1;
    position: relative;
    display: grid;
    place-items: center;
    padding: 0 6px 19px 0;
}

.artboard {
    width: 598px;
    height: 656px;
}

.outline {
    fill: none;
    stroke: #9a9ed0;
    stroke-width: 1px;
}

.outline.pink {
    stroke: #c46aa8;
}

.mark {
    fill: #e07880;
    font-family: "Liberation Sans", sans-serif;
    text-anchor: middle;
    dominant-baseline: central;
}

.vscroll {
    width: 16px;
    display: flex;
    flex-direction: column;
    background: #f5f5f5;
}

.vscroll button {
    height: 16px;
    flex: none;
}

.space {
    flex: 436;
}

.vscroll .after {
    flex: 402;
}

.doc-foot {
    display: flex;
    height: 17px;
    flex: none;
    font-family: "Roboto", sans-serif;
    background: #efefef;
}

.zoom-box {
    display: flex;
    width: 58px;
    border: 1px solid #777;
    background: #fff;
}

.zoom-box input {
    width: 41px;
    padding-left: 3px;
}

.zoom-box button {
    flex: 1;
    display: grid;
    place-items: center;
    background: #efefef;
}

.status {
    display: flex;
    align-items: center;
    justify-content: space-between;
    width: 177px;
    margin: 0 2px 0 4px;
    padding: 0 3px 0 2px;
    border-bottom: 1px solid #888;
    border-right: 1px solid #888;
}

.status svg {
    width: 13px;
    height: 13px;
}

.hscroll {
    flex: 1;
    display: flex;
    background: #f5f5f5;
}

.hscroll button {
    width: 16px;
    flex: none;
}

.hscroll .space {
    flex: 790;
}

.hscroll .after {
    flex: 788;
}

.corner {
    width: 17px;
    height: 17px;
    padding: 2px;
}

/* toolbox */
.toolbox {
    position: absolute;
    left: 22px;
    top: 20px;
    width: 62px;
    padding: 0 2px 2px;
    background: #efefef;
    border-right: 1px solid #000;
    border-bottom: 1px solid #000;
    box-shadow: -1px -1px #ddd;
}

.tool-bar {
    height: 13px;
    background: #9ab3d2;
    border-bottom: 1px solid #000;
}

.tool-logo {
    width: 100%;
    height: 24px;
    border-bottom: 1px solid #000;
}

.tools {
    display: grid;
    grid-template-columns: 25px 25px;
    justify-content: center;
    padding-top: 5px;
}

.tools button {
    position: relative;
    height: 21px;
    display: grid;
    place-items: center;
}

.tools button.on {
    background: #fff;
    border: 1px solid #222;
    border-right-color: #bbb;
    border-bottom-color: #bbb;
}

.tools .more::after {
    content: "";
    position: absolute;
    right: 0;
    bottom: 2px;
    border-left: 3px solid transparent;
    border-bottom: 3px solid #000;
}

.tools svg {
    width: 16px;
    height: 16px;
}

.tools hr {
    grid-column: 1 / 3;
    margin: 2px 0 1px;
}

.tools .type {
    font-family: "Liberation Serif", serif;
    font-size: 18px;
    line-height: 20px;
    font-weight: bold;
}

.fill-stroke {
    width: 57px;
    height: 46px;
    margin: 5px 0 2px;
}

.modes {
    display: flex;
    justify-content: space-around;
    padding: 1px 3px;
}

.modes button {
    width: 17px;
    height: 18px;
    display: grid;
    place-items: center;
}

.modes .on {
    border: 1px solid #222;
    background: #fafafa;
}

.modes svg {
    width: 11px;
    height: 11px;
}

.m-white, .m-grad {
    width: 10px;
    height: 10px;
    border: 1px solid #888;
    background: #fff;
}

.m-grad {
    background: linear-gradient(90deg, #fff, #333);
}

/* palettes */
.palettes {
    position: absolute;
    top: 18px;
    right: 4px;
    width: 209px;
    display: flex;
    flex-direction: column;
}

.palette {
    display: flex;
    flex-direction: column;
    background: #efefef;
    border: 1px solid #eee;
    border-right: 2px solid #000;
    border-bottom: 2px solid #000;
}

.docked {
    margin-right: 1px;
    border: 1px solid #aaa;
    box-shadow: 0 0 6px rgba(0, 0, 0, 0.3);
}

.color {
    height: 62px;
    padding-top: 2px;
}

.swatches {
    height: 98px;
}

.strokes {
    height: 45px;
    border-top-color: #000;
}

.appearance {
    height: 131px;
    margin-top: 3px;
}

.layers {
    height: 113px;
    margin-top: 1px;
}

.pal-bar {
    display: flex;
    justify-content: flex-end;
    gap: 2px;
    height: 13px;
    flex: none;
    padding: 1px 1px 0;
    background: #9ab3d2;
    border-bottom: 1px solid #000;
}

.pal-bar button {
    width: 11px;
    height: 11px;
    background: #efefef;
    border-right: 1px solid #000;
    border-bottom: 1px solid #000;
}

.pal-bar svg {
    width: 10px;
    height: 10px;
    stroke: #000;
    stroke-width: 2px;
}

.pal-bar.short {
    height: 9px;
    padding: 0 1px;
    align-items: flex-end;
    overflow: hidden;
}

.pal-gap {
    height: 5px;
    flex: none;
    background: #fff;
}

.swatches .pal-gap {
    height: 3px;
}

.layers .pal-gap {
    height: 4px;
}

.tabs {
    display: flex;
    align-items: flex-end;
    height: 16px;
    flex: none;
    padding: 0 3px 0 2px;
    background: #a3a3a3;
    border-bottom: 1px solid #ddd;
}

.tab {
    display: flex;
    align-items: center;
    gap: 2px;
    height: 14px;
    padding: 0 12px 0 5px;
    margin-right: -5px;
    background: #b8b8b0;
    color: #444;
    line-height: 12px;
    white-space: nowrap;
    clip-path: polygon(0 0, calc(100% - 12px) 0, 100% 100%, 0 100%);
}

.tab.on {
    background: #efefef;
    color: #111;
    padding-left: 4px;
}

.strokes .tab {
    padding-right: 13px;
}

.swatches .tab.on, .appearance .tab.on, .layers .tab.on {
    padding-left: 7px;
}

.tabs .round {
    margin-left: auto;
}

.appearance .tabs {
    height: 17px;
}

.cut {
    height: 12px;
    border-bottom: none;
}

.cut .tab {
    height: 12px;
}

.updown {
    width: 7px;
    height: 8px;
    background: #444;
    clip-path: polygon(50% 0, 100% 40%, 0 40%, 0 60%, 100% 60%, 50% 100%, 0 60%, 0 40%);
}

.spectrum {
    display: flex;
    height: 17px;
    margin: 6px 4px 0;
    border: 1px solid #000;
}

.spectrum svg {
    width: 16px;
    height: 15px;
    border-right: 1px solid #000;
}

.rainbow {
    flex: 1;
    background:
        linear-gradient(180deg, rgba(255, 255, 255, 0.5), transparent 40%, transparent 60%, rgba(0, 0, 0, 0.5)),
        linear-gradient(90deg, #e23030, #f5e020 17%, #3cb043 34%, #40c8e8 53%, #3040b0 68%, #c030a0 85%, #e83050);
}

.bw {
    width: 16px;
    background: linear-gradient(180deg, #fff 50%, #000 50%);
}

.scroll-pane {
    display: flex;
    flex: 1;
    min-height: 0;
    border-top: 1px solid #000;
    border-bottom: 1px solid #000;
}

.swatch-grid {
    flex: 1;
    display: grid;
    grid-template-columns: repeat(12, 1fr);
    grid-auto-rows: 16px;
}

.swatch {
    border-right: 1px solid #000;
    border-bottom: 1px solid #000;
}

.swatch svg {
    width: 15px;
    height: 15px;
}

.mini-scroll {
    width: 16px;
    flex: none;
    display: flex;
    flex-direction: column;
    justify-content: space-between;
    align-items: center;
    padding: 5px 0;
    background: #f0f0f0;
    border-left: 1px solid #ddd;
}

.mini-scroll .up {
    border-bottom-color: #888;
}

.mini-scroll .down {
    border-top-color: #888;
}

.foot {
    display: flex;
    align-items: center;
    justify-content: space-between;
    height: 15px;
    flex: none;
    padding-left: 2px;
}

.foot button {
    height: 14px;
    min-width: 18px;
    display: grid;
    place-items: center;
    color: #222;
}

.foot svg {
    width: 11px;
    height: 11px;
}

.foot .wide {
    width: 22px;
}

.foot .on {
    width: 29px;
    background: #fff;
    border: 1px solid #222;
    border-right-color: #bbb;
    border-bottom-color: #bbb;
}

.foot .dim {
    opacity: 0.6;
}

.foot .grip {
    align-self: flex-end;
}

.icons6 button {
    width: 31px;
}

.icons6 button + .dim {
    margin-left: 5px;
}

.icons6 .dim + .dim {
    margin-left: 0;
}

.icons5 {
    padding-left: 31px;
}

.weight-row {
    display: flex;
    align-items: center;
    gap: 3px;
    flex: 1;
    padding: 2px 0 0 26px;
}

.weight-row .weight {
    width: 77px;
    height: 16px;
}

.rows {
    flex: 1;
    min-width: 0;
}

.row {
    display: flex;
    align-items: center;
    gap: 8px;
    height: 20px;
    padding-left: 22px;
    border-bottom: 1px solid #fff;
}

.row:last-child {
    border-bottom: none;
}

.row span {
    width: 34px;
}

.head {
    padding-left: 2px;
    gap: 4px;
    font-weight: bold;
    border-bottom: 1px solid #000;
}

.empty-thumb {
    width: 16px;
    height: 16px;
    border: 1px solid #224;
    background: #fff;
}

.chip {
    width: 13px;
    height: 13px;
    padding: 1px;
    border: 1px solid #000;
    background: #fff;
}

.chip svg {
    width: 9px;
    height: 9px;
    outline: 1px solid #000;
}

.chip.blue {
    background: #0000e6 content-box;
}

.layer {
    display: flex;
    align-items: center;
    height: 20px;
    border-bottom: 1px solid #bbb;
    padding-left: 4px;
}

.eye {
    width: 12px;
    height: 10px;
}

.lock {
    width: 13px;
    height: 15px;
    margin: 0 12px 0 9px;
    border: 1px solid #ccc;
    border-top-color: #999;
    border-left-color: #999;
}

.twist {
    width: 10px;
    height: 10px;
    margin: 0 8px 0 -4px;
}

.thumb {
    width: 16px;
    height: 16px;
    margin-right: 4px;
}

.target {
    width: 9px;
    height: 9px;
    margin: 0 14px 0 auto;
    border: 1px solid #333;
    border-radius: 50%;
}

.sub {
    border-bottom-color: #000;
}

.sub .lock {
    margin-right: 5px;
}

.twist-cell {
    display: grid;
    place-items: center end;
    width: 31px;
    height: 19px;
    background: #fff;
    border-left: 1px solid #000;
}

.twist-cell .twist {
    margin: 0 5px 0 0;
}

.picked {
    flex: 1;
    display: flex;
    align-items: center;
    height: 19px;
    padding-left: 4px;
    background: #0a78d7;
    color: #fff;
    font-weight: bold;
}

.picked .target {
    border-color: #fff;
}

.layer-foot span {
    width: 62px;
    padding-left: 7px;
}

/* taskbar */
.taskbar {
    display: flex;
    height: 40px;
    flex: none;
    background: #202b48;
    color: #fff;
    font-family: "Open Sans", sans-serif;
}

.start {
    width: 48px;
    display: grid;
    place-items: center;
}

.start svg {
    width: 16px;
    height: 16px;
}

.search {
    display: flex;
    align-items: center;
    gap: 11px;
    width: 344px;
    padding-left: 11px;
    background: #f2f2f2;
    border: 1px solid #ccc;
    color: #333;
}

.search svg {
    width: 17px;
    height: 17px;
}

.search input {
    flex: 1;
    font-size: 14px;
}

.search input::placeholder {
    color: #333;
    opacity: 1;
}

.apps {
    display: flex;
    flex: none;
}

.apps button {
    width: 49px;
    display: grid;
    place-items: center;
}

.apps svg {
    width: 24px;
    height: 24px;
}

.apps .active {
    background: #515a72;
    border-bottom: 2px solid #9fc0f5;
}

.apps .open {
    background: linear-gradient(#a8c4f4, #a8c4f4) center bottom / 40px 2px no-repeat;
}

.glyph {
    font: bold 19px "Liberation Sans", sans-serif;
}

.glyph-mid {
    font: bold 11px "Liberation Sans", sans-serif;
}

.glyph-small {
    font: bold 6px "Liberation Sans", sans-serif;
}

.tray {
    display: flex;
    align-items: center;
    gap: 8px;
    margin-left: auto;
    padding-right: 14px;
    font-size: 11px;
}

.tray svg {
    width: 16px;
    height: 16px;
}

.clock {
    width: 72px;
    display: flex;
    flex-direction: column;
    align-items: center;
    line-height: 18px;
}

.notify {
    position: relative;
    width: 26px;
    margin-left: 5px;
}

.notify b {
    position: absolute;
    left: 8px;
    top: 5px;
    width: 16px;
    height: 16px;
    border: 1px solid #aaa;
    border-radius: 50%;
    background: #3a4358;
    text-align: center;
    line-height: 14px;
}
```

FILE: script.js
```js
const NS = "http://www.w3.org/2000/svg";
const art = document.getElementById("art");

function add(tag, attrs, text) {
    const el = document.createElementNS(NS, tag);
    for (const key in attrs) el.setAttribute(key, attrs[key]);
    if (text) el.textContent = text;
    art.appendChild(el);
}

// toothed arm, drawn at three times its size
const ARM = "M270 24A6 6 0 1 1 280 22C278 38 268 50 252 55C220 63 180 70 160 76C130 80 120 95 105 108" +
    "C95 120 90 126 78 135C60 148 48 158 44 165C36 180 40 215 32 230C28 238 22 238 18 236A5 5 0 1 1 12 232" +
    "L12 221L22 222L23 213L14 212L16 200L27 201L28 192L19 190L21 178L31 180L33 171L24 169L27 158L38 160" +
    "L40 151L33 149L45 133L58 141L66 136L58 122L74 120L84 128L90 122L80 103L88 98L104 110L112 103L104 84" +
    "L112 75L154 75L158 64L139 60L170 52L232 50L232 38L244 34L266 27Z";

const arms = [[672, 243], [672, 321], [672, 399], [672, 477], [765, 477],
    [762, 566], [854, 566], [947, 566], [1039, 566], [1131, 566]];

arms.forEach(([x, y], i) => {
    add("path", { d: ARM, class: "outline", transform: `translate(${x} ${y}) scale(.333)`, "vector-effect": "non-scaling-stroke" });
    add("text", { x: x + 59, y: y + 20, class: "mark", "font-size": 4 }, "Z-" + (i + 1));
    [[92, 7], [82, 16], [54, 23], [38, 30], [31, 39], [23, 45], [15, 54], [13, 62], [11, 69]].forEach(([dx, dy], n) => {
        add("text", { x: x + dx, y: y + dy, class: "mark", "font-size": n === 1 ? 6 : 4 }, String(n));
    });
});

// cx, cy, outer radius, inner radius, notch depth, number size, label, label offset
const rings = [
    [718.8, 602.3, 43.6, 34, 5, 4, "Z-1", [0, 39]],
    [897.6, 519, 37.5, 28, 5, 4, "Z-4", [32, 9]],
    [968.5, 526, 30.5, 19.5, 5, 4, "Z-5", [0, 25]],
    [768, 759.8, 95.8, 89.5, 3, 3, "Z-0", [0, -92]],
    [961.5, 748.5, 91, 69.3, 11, 8, "Z-9", [-3, -82]],
    [1122.2, 773.5, 66.6, 43.8, 11, 8, "Z-8", [-2, 56]],
    [1076, 683.7, 20.7, 13.3, 4, 3, "", [0, 0]],
    [1116.5, 687.3, 17, 11, 4, 3, "", [0, 0]],
    [1204.7, 792.7, 13.3, 6.5, 3, 3, "", [0, 0]],
    [1206.8, 824.3, 15.3, 9, 4, 3, "", [0, 0]]
];

rings.forEach(([cx, cy, ro, ri, depth, size, label, [lx, ly]]) => {
    const half = 2;
    const off = Math.asin(half / ro);
    const rn = ro - depth;
    const offIn = Math.asin(half / rn);
    const pt = (r, a) => (cx + r * Math.cos(a)).toFixed(1) + " " + (cy - r * Math.sin(a)).toFixed(1);
    let d = "";
    for (let i = 0; i < 10; i++) {
        const a = i * Math.PI / 5;
        d += (i ? "L" : "M") + pt(ro, a - off) + "L" + pt(rn, a - offIn) + "L" + pt(rn, a + offIn) + "L" + pt(ro, a + off);
        d += `A${ro} ${ro} 0 0 0 ` + pt(ro, a + Math.PI / 5 - off);
        const rt = ri + size / 3;
        const x = cx + rt * Math.cos(a), y = cy - rt * Math.sin(a);
        add("text", { x, y, class: "mark", "font-size": size, transform: `rotate(${-i * 36} ${x} ${y})` }, String(i + 1));
    }
    add("path", { d: d + "Z", class: "outline" });
    add("circle", { cx, cy, r: ri, class: ro < 14 ? "outline pink" : "outline" });
    if (label) add("text", { x: cx + lx, y: cy + ly, class: "mark", "font-size": size > 5 ? 10 : 5 }, label);
});

// swatches palette
const none = '<svg><use href="#none"/></svg>';
const reg = '<svg viewBox="0 0 16 16"><path d="M0 0h16v16H0z" fill="#fff"/><circle cx="8" cy="8" r="5" fill="none" stroke="#000"/><circle cx="8" cy="8" r="2"/><path d="M8 1v14M1 8h14" stroke="#000"/></svg>';
const spot = c => `linear-gradient(135deg, ${c} 70%, #fff 70%)`;
const colors = [
    "#fff", "#fff", "#fff", "#000", "#3c3c3c", "#606060", "#888", "#b0b0b0", "#e2b793", "#d0955c", "#8a5a2b", "#5c3d1c",
    "#8e0000", "#c00000", "#ff0000", "#ff4800", "#ff8000", "#ffc000", "#ffff00", "#c8ff00", "#80ff00", "#00ff00", "#00a040", "#006c30",
    "#005a50", "#007898", "#00a0c8", "#0060b8", "#0040ff", "#0000ff", "#2010d0", "#4010c8", "#6010c8", "#8010d0", "#b010d0", "#d010b0",
    "linear-gradient(90deg, #fff, #222)", "radial-gradient(#fff, #222)", "linear-gradient(90deg, #555, #eee 50%, #777 60%, #fff)",
    "linear-gradient(90deg, #f33, #fd0, #3c3, #26f)", "repeating-conic-gradient(#116 0 25%, #99c 0 50%) 0 0 / 5px 5px",
    "repeating-conic-gradient(#e9a030 0 25%, #f5e6c0 0 50%) 0 0 / 8px 8px",
    spot("#ff0000"), spot("#ff8000"), spot("#ffff00"), spot("#00ff00"), spot("#00a0c0"), spot("#0000ff")
];

const grid = document.getElementById("swatches");
colors.forEach((c, i) => {
    const b = document.createElement("button");
    b.className = "swatch";
    b.setAttribute("aria-label", "Swatch " + (i + 1));
    b.style.background = c;
    if (i === 0) b.innerHTML = none;
    if (i === 1) b.innerHTML = reg;
    grid.appendChild(b);
});
```
